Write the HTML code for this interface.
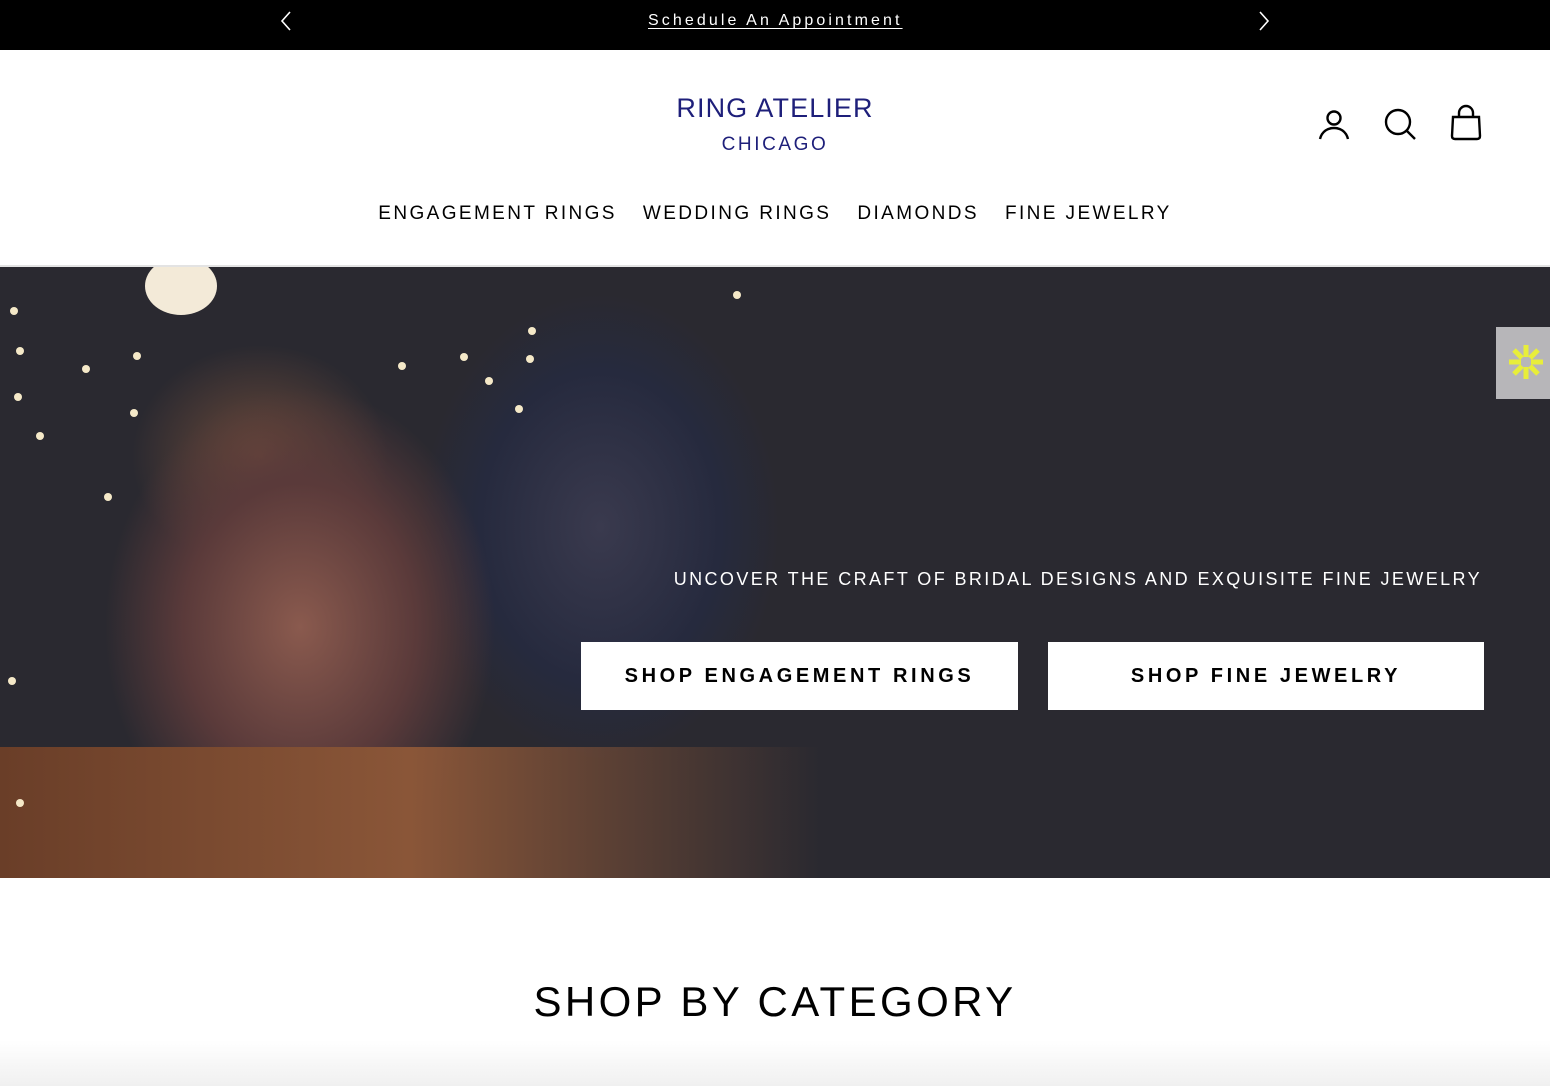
<!DOCTYPE html>
<html><head><meta charset="utf-8"><style>
*{margin:0;padding:0;box-sizing:border-box}
body{width:1550px;height:1086px;overflow:hidden;background:#fff;font-family:"Liberation Sans",sans-serif;position:relative}
.top{position:absolute;left:0;top:0;width:1550px;height:50px;background:#000}
.top a{position:absolute;left:648px;top:12px;color:#fff;font-size:16px;letter-spacing:3.1px;text-decoration:underline;text-underline-offset:3px}
.logo1{position:absolute;left:0;width:1550px;top:93px;text-align:center;color:#1e1f7a;font-size:27px;letter-spacing:1.1px}
.logo2{position:absolute;left:0;width:1550px;top:134px;text-align:center;color:#1e1f7a;font-size:19px;letter-spacing:2.6px}
.nav{position:absolute;top:203px;left:0;width:1550px;text-align:center;font-size:19px;letter-spacing:2.4px;color:#000}
.nav span{margin:0 13px}
.line{position:absolute;top:265px;left:0;width:1550px;height:2px;background:#e3e3e3}
.hero{position:absolute;top:267px;left:0;width:1550px;height:611px;background:#2a2930;overflow:hidden}
.tag{position:absolute;top:569px;right:68px;color:#fff;font-size:18px;letter-spacing:2.4px}
.btn{position:absolute;top:642px;height:68px;background:#fff;color:#000;font-size:20px;font-weight:bold;letter-spacing:3.6px;text-align:center;line-height:68px}
.h2{position:absolute;top:978px;left:0;width:1550px;text-align:center;font-size:42px;letter-spacing:3.4px;color:#000}
.d{position:absolute;width:8px;height:8px;border-radius:50%;background:#f5e9c8}
</style></head><body>
<div class="top">
<svg style="position:absolute;left:278px;top:10px" width="16" height="22"><path d="M12 2L4 11l8 9" stroke="#fff" stroke-width="1.6" fill="none"/></svg>
<a>Schedule An Appointment</a>
<svg style="position:absolute;left:1256px;top:10px" width="16" height="22"><path d="M4 2l8 9-8 9" stroke="#fff" stroke-width="1.6" fill="none"/></svg>
</div>
<div class="logo1">RING ATELIER</div>
<div class="logo2">CHICAGO</div>
<svg style="position:absolute;left:1316px;top:106px" width="36" height="36" fill="none" stroke="#000" stroke-width="2.4"><circle cx="18" cy="12" r="6.5"/><path d="M4 33c2-8 8-11 14-11s12 3 14 11"/></svg>
<svg style="position:absolute;left:1382px;top:106px" width="36" height="36" fill="none" stroke="#000" stroke-width="2.4"><circle cx="16" cy="16" r="12"/><path d="M25 25l8 8"/></svg>
<svg style="position:absolute;left:1448px;top:104px" width="36" height="38" fill="none" stroke="#000" stroke-width="2.4"><path d="M11 13V9a7 7 0 0114 0v4"/><path d="M5 13h26l1 19q0 3-3 3H7q-3 0-3-3z"/></svg>
<div class="nav"><span>ENGAGEMENT RINGS</span><span>WEDDING RINGS</span><span>DIAMONDS</span><span>FINE JEWELRY</span></div>
<div class="line"></div>
<div class="hero">
<div style="position:absolute;left:0;top:0;width:820px;height:611px;background:radial-gradient(ellipse 260px 320px at 300px 360px,#8a5a4e 0%,#5a3a3a 45%,transparent 75%),radial-gradient(ellipse 200px 260px at 600px 260px,#3a3a4e 0%,#262a3e 60%,transparent 90%),radial-gradient(ellipse 160px 140px at 260px 190px,#6b4a3a,transparent 80%)"></div>
<div style="position:absolute;left:0;top:480px;width:820px;height:131px;background:linear-gradient(90deg,#6a3e28,#8a5638 50%,rgba(42,41,48,0))"></div>
<div style="position:absolute;left:145px;top:-10px;width:72px;height:58px;border-radius:50%;background:#f3ead8"></div>
<div class="d" style="left:10px;top:40px"></div><div class="d" style="left:16px;top:80px"></div><div class="d" style="left:82px;top:98px"></div><div class="d" style="left:133px;top:85px"></div><div class="d" style="left:14px;top:126px"></div><div class="d" style="left:130px;top:142px"></div><div class="d" style="left:36px;top:165px"></div><div class="d" style="left:104px;top:226px"></div><div class="d" style="left:398px;top:95px"></div><div class="d" style="left:460px;top:86px"></div><div class="d" style="left:485px;top:110px"></div><div class="d" style="left:528px;top:60px"></div><div class="d" style="left:526px;top:88px"></div><div class="d" style="left:515px;top:138px"></div><div class="d" style="left:8px;top:410px"></div><div class="d" style="left:16px;top:532px"></div><div class="d" style="left:733px;top:24px"></div>
<div style="position:absolute;left:1496px;top:60px;width:54px;height:72px;background:#b7b6b9"></div>
<svg style="position:absolute;left:1505px;top:74px" width="42" height="42"><g stroke="#e8ee3a" stroke-width="5"><path d="M21 4v12M21 26v12M4 21h12M26 21h12M9 9l8 8M25 25l8 8M33 9l-8 8M17 25l-8 8"/></g></svg>
</div>
<div class="tag">UNCOVER THE CRAFT OF BRIDAL DESIGNS AND EXQUISITE FINE JEWELRY</div>
<div class="btn" style="left:581px;width:437px">SHOP ENGAGEMENT RINGS</div>
<div class="btn" style="left:1048px;width:436px">SHOP FINE JEWELRY</div>
<div class="h2">SHOP BY CATEGORY</div>
<div style="position:absolute;left:0;top:1040px;width:1550px;height:46px;background:linear-gradient(#fff,#f0f0f0)"></div>
</body></html>
